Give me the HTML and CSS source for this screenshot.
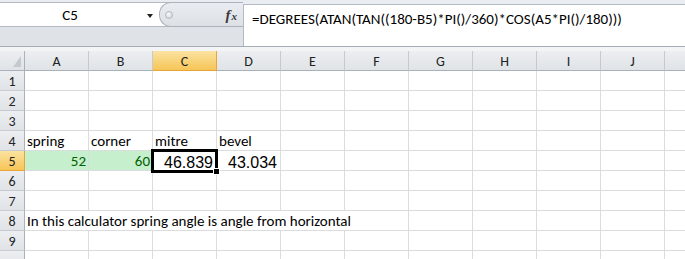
FILE: index.html
```html
<!DOCTYPE html>
<html lang="en">
<head>
  <meta charset="UTF-8" />
  <title>Mitre and bevel calculator</title>
  <link rel="stylesheet" href="styles.css">
</head>
<body>

  <div class="formula-area">
    <div class="left-pane">
      <div class="name-row">
        <div class="name-box">
          <span class="cell-name">C5</span>
          <span class="drop"><span class="arrow"></span></span>
        </div>
        <div class="fx-pill">
          <span class="grip"></span>
          <span class="fx"><i>f</i><i class="x">x</i></span>
        </div>
      </div>
    </div>
    <div class="right-pane">
      <div class="formula-input">=DEGREES(ATAN(TAN((180-B5)*PI()/360)*COS(A5*PI()/180)))</div>
    </div>
  </div>
  <div class="gap-strip"></div>

  <div class="sheet" id="sheet"></div>

  <script>
    // K and row 10 are only partly in view, so their labels stay blank
    const cols = ['A', 'B', 'C', 'D', 'E', 'F', 'G', 'H', 'I', 'J', ''];
    const cells = {
      A4: { v: 'spring' },
      B4: { v: 'corner' },
      C4: { v: 'mitre' },
      D4: { v: 'bevel' },
      A5: { v: '52', cls: 'num good' },
      B5: { v: '60', cls: 'num good' },
      C5: { v: '46.839', cls: 'num big active' },
      D5: { v: '43.034', cls: 'num big' },
      A8: { v: 'In this calculator spring angle is angle from horizontal', span: 6 }
    };
    const sheet = document.getElementById('sheet');

    function add(cls, text) {
      const div = document.createElement('div');
      div.className = cls;
      if (text !== undefined) div.textContent = text;
      sheet.appendChild(div);
      return div;
    }

    add('corner');
    cols.forEach(c => add('col-head' + (c === 'C' ? ' picked' : ''), c));

    for (let r = 1; r <= 10; r++) {
      add('row-head' + (r === 5 ? ' picked' : ''), r < 10 ? r : '');
      for (let i = 0; i < cols.length; i++) {
        const cell = cells[cols[i] + r];
        if (!cell) {
          add('cell');
          continue;
        }
        const div = add('cell ' + (cell.cls || ''), cell.v);
        if (cell.span) {
          div.style.gridColumn = 'span ' + cell.span;
          i += cell.span - 1;
        }
      }
    }
  </script>

</body>
</html>
```

FILE: styles.css
```css
html, body {
  overflow: hidden;
}

body {
  margin: 0;
  font-family: Calibri, Carlito, Lato, sans-serif;
  font-size: 15px;
  color: #000;
  background: #fff;
}

/* formula bar */

.formula-area {
  display: flex;
  height: 46px;
  border-bottom: 1px solid #a3acb7;
}

.left-pane {
  width: 243px;
  padding-top: 2px;
  box-sizing: border-box;
  background: linear-gradient(#e9ecf0 0 2px, #dfe3e8 2px);
}

.name-row {
  display: flex;
  height: 25px;
  border-top: 1px solid #b3bac4;
  border-bottom: 1px solid #b3bac4;
  box-sizing: border-box;
}

.name-box {
  width: 168px;
  display: flex;
  align-items: center;
  background: #fff;
}

.cell-name {
  width: 140px;
  text-align: center;
  padding-top: 1px;
}

.drop {
  width: 19px;
  display: flex;
  justify-content: center;
}

.arrow {
  width: 0;
  height: 0;
  border-left: 3.5px solid transparent;
  border-right: 3.5px solid transparent;
  border-top: 4px solid #222;
  margin-top: 2px;
}

.fx-pill {
  flex: 1;
  margin: -1px 0 -1px -9px;
  display: flex;
  align-items: center;
  justify-content: space-between;
  padding: 0 6px 0 5px;
  border: 1px solid #aab2bc;
  border-right: none;
  border-radius: 12px 0 0 12px;
  background: linear-gradient(#e9ecf0, #dde1e6);
}

.grip {
  width: 8px;
  height: 8px;
  border-radius: 50%;
  border: 1px solid #b4bbc4;
  background: radial-gradient(circle at 40% 35%, #fafbfc, #c9ced5);
  box-sizing: border-box;
}

.fx {
  font-family: "Liberation Serif", serif;
  font-weight: bold;
  color: #3a3a3a;
  display: flex;
  align-items: baseline;
  margin-top: 1px;
}

.fx i {
  font-size: 15px;
}

.fx .x {
  font-size: 11px;
  margin-left: 1px;
}

.right-pane {
  flex: 1;
  display: flex;
  flex-direction: column;
  background: #e9ecf0;
}

.formula-input {
  flex: 1;
  margin-top: 4px;
  padding: 5px 0 0 8px;
  border-top: 1px solid #b3bac4;
  border-left: 1px solid #b3bac4;
  background: #fff;
  white-space: nowrap;
}

.gap-strip {
  height: 4px;
  background: #f3f4f6;
}

/* worksheet */

.sheet {
  display: grid;
  grid-template-columns: 25px repeat(11, 64px);
  grid-auto-rows: 20px;
  width: 100%;
  overflow: hidden;
}

.corner,
.col-head,
.row-head {
  box-sizing: border-box;
  display: flex;
  align-items: center;
  justify-content: center;
  background: linear-gradient(#eceef1, #e0e3e7);
  color: #222;
  font-size: 14px;
}

.corner {
  position: relative;
  border-right: 1px solid #a9b1ba;
  border-bottom: 1px solid #a9b1ba;
}

.corner::after {
  content: '';
  position: absolute;
  right: 3px;
  bottom: 3px;
  border-left: 8px solid transparent;
  border-bottom: 11px solid #c4c9cf;
}

.col-head {
  border-right: 1px solid #c6cad0;
  border-bottom: 1px solid #a9b1ba;
  padding-top: 1px;
}

.row-head {
  border-right: 1px solid #a9b1ba;
  border-bottom: 1px solid #c6cad0;
  padding-top: 2px;
}

.col-head.picked,
.row-head.picked {
  background: linear-gradient(#fbe3a1, #f6c557);
  border-color: #e8a53c;
}

.cell {
  box-sizing: border-box;
  display: flex;
  align-items: flex-end;
  padding: 0 2px;
  border-right: 1px solid #dadcdd;
  border-bottom: 1px solid #dadcdd;
  white-space: nowrap;
  line-height: 18px;
}

.num {
  justify-content: flex-end;
}

.good {
  background: #c6efce;
  color: #006100;
}

.big {
  font-family: "Liberation Sans", Arial, sans-serif;
  font-size: 16px;
  line-height: 15px;
  padding-right: 3px;
}

.active {
  position: relative;
}

.active::after {
  content: '';
  position: absolute;
  left: -2px;
  top: -2px;
  right: -2px;
  bottom: -3px;
  border: 3px solid #000;
}

.active::before {
  content: '';
  position: absolute;
  right: -4px;
  bottom: -5px;
  width: 5px;
  height: 5px;
  background: #000;
  border: 1px solid #fff;
  z-index: 1;
}
```
